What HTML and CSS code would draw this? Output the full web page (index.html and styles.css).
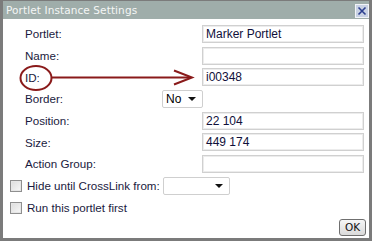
FILE: index.html
```html
<!DOCTYPE html>
<html lang="en">
<head>
    <meta charset="UTF-8">
    <title>Portlet Instance Settings</title>
    <link rel="stylesheet" href="styles.css">
</head>
<body>
    <div class="dialog">
        <div class="titlebar">
            <span class="title">Portlet Instance Settings</span>
            <span class="close">
                <svg width="10" height="10" viewBox="0 0 10 10"><path d="M1.5 1.5 L8.5 8.5 M8.5 1.5 L1.5 8.5" stroke="#2c3f8f" stroke-width="1.6"/></svg>
            </span>
        </div>
        <div class="content">
            <div class="form">
                <label>Portlet:</label>
                <div class="field"><div class="input">Marker Portlet</div></div>

                <label>Name:</label>
                <div class="field"><div class="input"></div></div>

                <label>ID:</label>
                <div class="field"><div class="input">i00348</div></div>

                <label>Border:</label>
                <div class="field field-select"><div class="select small">No<span class="caret"></span></div></div>

                <label>Position:</label>
                <div class="field"><div class="input">22 104</div></div>

                <label>Size:</label>
                <div class="field"><div class="input">449 174</div></div>

                <label>Action Group:</label>
                <div class="field"><div class="input"></div></div>
            </div>

            <div class="check-row">
                <span class="checkbox"></span>
                <span class="check-label">Hide until CrossLink from:</span>
                <div class="select wide"><span class="caret"></span></div>
            </div>
            <div class="check-row">
                <span class="checkbox"></span>
                <span class="check-label">Run this portlet first</span>
            </div>

            <div class="actions">
                <button class="ok">OK</button>
            </div>

            <!-- annotation drawn over the form -->
            <svg class="annotation" width="200" height="40" viewBox="0 0 200 40">
                <ellipse cx="33" cy="19" rx="15.5" ry="12" fill="none" stroke="#8a1a1a" stroke-width="2"/>
                <path d="M49 18.5 L188 18.5" stroke="#8a1a1a" stroke-width="2"/>
                <path d="M171 11.5 L189 18.5 L171 25.5" fill="none" stroke="#8a1a1a" stroke-width="2"/>
            </svg>
        </div>
    </div>
</body>
</html>
```

FILE: styles.css
```css
body {
    margin: 0;
    background: #ffffff;
    font-family: "Liberation Sans", Arial, sans-serif;
}
.dialog {
    width: 372px;
    height: 241px;
    box-sizing: border-box;
    border: 3px solid #7b7b7b;
    border-top: 1px solid #7b7b7b;
    background: #ffffff;
    display: flex;
    flex-direction: column;
    overflow: hidden;
}
.titlebar {
    flex-shrink: 0;
    height: 18px;
    background: #9fadaa;
    display: flex;
    align-items: center;
    justify-content: space-between;
    padding: 0 0 0 3px;
}
.title {
    font-family: "DejaVu Sans", Verdana, sans-serif;
    font-size: 10.5px;
    color: #f4f6f5;
    letter-spacing: 0.1px;
}
.close {
    width: 12px;
    height: 12px;
    border: 1px solid #f2f4f8;
    background: #c9d2e4;
    display: flex;
    align-items: center;
    justify-content: center;
    margin-top: 1px;
}
.content {
    position: relative;
    flex: 1;
    padding: 4px 3px 0 6px;
}
.form {
    display: grid;
    grid-template-columns: 153px 1fr;
    grid-auto-rows: 21.7px;
    font-size: 11.6px;
    color: #1a1a40;
}
.form label {
    padding-left: 16px;
    align-self: center;
}
.field {
    display: flex;
    align-items: center;
    padding-left: 40px;
}
.field-select {
    padding-left: 0;
}
.input {
    width: 162px;
    height: 18px;
    box-sizing: border-box;
    border: 1px solid #d0d0d0;
    box-shadow: inset 0 0 0 1px #ececec;
    padding: 1px 3px;
    font-size: 12px;
    line-height: 15px;
    color: #10103a;
}
.select {
    height: 18px;
    box-sizing: border-box;
    border: 1px solid #cfcfcf;
    border-radius: 2px;
    background: #ffffff;
    display: flex;
    align-items: center;
    justify-content: space-between;
    padding: 0 6px 0 3px;
    font-size: 12px;
    color: #000000;
}
.select.small {
    width: 41px;
}
.select.wide {
    width: 67px;
    justify-content: flex-end;
}
.caret {
    width: 0;
    height: 0;
    border-left: 4px solid transparent;
    border-right: 4px solid transparent;
    border-top: 4px solid #111111;
}
.check-row {
    display: flex;
    align-items: center;
    height: 22px;
    font-size: 11.6px;
    color: #1a1a40;
}
.checkbox {
    width: 12px;
    height: 12px;
    box-sizing: border-box;
    border: 1px solid #8f8f8f;
    background: linear-gradient(135deg, #dcdcdc, #f8f8f8);
    box-shadow: inset 0 0 0 1px #e6e6e6;
    margin-left: 1px;
    margin-right: 5px;
}
.check-label {
    margin-right: 3px;
}
.actions {
    display: flex;
    justify-content: flex-end;
    margin-top: 0;
}
.ok {
    width: 27px;
    height: 17px;
    padding: 0;
    border: 1px solid #6f6f6f;
    border-radius: 3px;
    background: linear-gradient(#f6f6f6, #dadada);
    font-family: "DejaVu Sans", Verdana, sans-serif;
    font-size: 10.5px;
    color: #111111;
}
.annotation {
    position: absolute;
    left: 0;
    top: 40px;
}
```
